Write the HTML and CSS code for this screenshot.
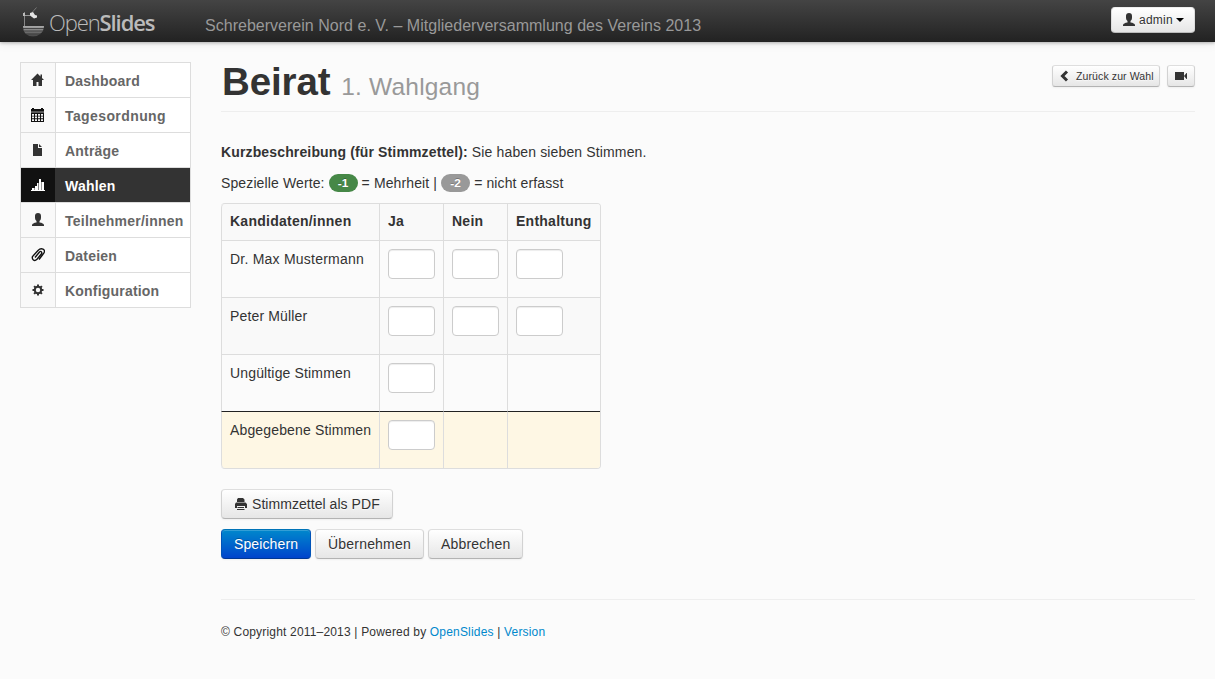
FILE: index.html
```html
<!DOCTYPE html>
<html lang="de">
<head>
<meta charset="utf-8">
<title>Beirat – OpenSlides</title>
<link rel="stylesheet" href="styles.css">
</head>
<body>
<header class="navbar">
  <a class="logo" href="#">
    <svg class="boat" width="24" height="32" viewBox="0 0 24 32">
      <defs><linearGradient id="hull" x1="0" x2="0" y1="0" y2="1"><stop offset="0" stop-color="#aaa"/><stop offset="1" stop-color="#444"/></linearGradient></defs>
      <path d="M1 20h21q0 5-4 8-3 2.500-7 2.500t-7-2.500q-3-3-3-8z" fill="url(#hull)"/>
      <path d="M1 22.500h21M2 25h20M4 28h15" stroke="#333" stroke-width=".8"/>
      <path d="M2.500 6v14" stroke="#888"/><path d="M1 7h2v3H1z" fill="#bbb"/><path d="M3 9.500h5" stroke="#999"/>
      <path d="M8 7l3-1 2 3 2 .5v2l-3 1-4-3z" fill="#e4e4e4"/>
      <path d="M10.500 6l4-4.500" stroke="#777"/>
    </svg>
    <span class="logo-text"><span class="logo-open">Open</span><b class="logo-slides">Slides</b></span>
  </a>
  <span class="event">Schreberverein Nord e. V. – Mitgliederversammlung des Vereins 2013</span>
  <button class="btn user">
    <svg width="14" height="14" viewBox="0 0 14 14"><path d="M4 3q0-3 3-3t3 3v2q0 2-1.500 3v1.500q4 .5 4.500 2.500v1H1v-1q.5-2 4.500-2.500V8Q4 7 4 5z" fill="#333"/></svg><span class="t-admin">admin</span><i class="caret"></i>
  </button>
</header>
<div class="page">
  <nav class="sidebar">
    <a href="#"><span class="icon"><svg width="14" height="14" viewBox="0 0 14 14"><path d="M6.500 .5L0 7h2v6h3.500V9h2v4H11V7h2L11 5V1.500H9.500V3.500z" fill="#333"/></svg></span><span class="label l1">Dashboard</span></a>
    <a href="#"><span class="icon"><svg width="14" height="14" viewBox="0 0 14 14"><path d="M0 1h1V0h2v1h7V0h2v1h1v2H0z" fill="#111"/><path d="M0 3h13v1.500H0z" fill="#555"/><path d="M0 4.500h13V14H0z" fill="#111"/><path d="M1 6h2v1.700H1zM4 6h2v1.700H4zM7 6h2v1.700H7zM10 6h2v1.700h-2zM1 8.600h2v1.700H1zM4 8.600h2v1.700H4zM7 8.600h2v1.700H7zM10 8.600h2v1.700h-2zM1 11.200h2v1.700H1zM4 11.200h2v1.700H4zM7 11.200h2v1.700H7zM10 11.200h2v1.700h-2z" fill="#f4f4f4"/></svg></span><span class="label l2">Tagesordnung</span></a>
    <a href="#"><span class="icon"><svg width="14" height="14" viewBox="0 0 14 14"><path d="M2 1h5v4h4v8H2zM8 1l3 3H8z" fill="#333"/></svg></span><span class="label l3">Anträge</span></a>
    <a class="active" href="#"><span class="icon"><svg width="14" height="14" viewBox="0 0 14 14"><path d="M0 12h14v1H0zM1 10h2v2H1zM4 8h2v4H4zM6 5h1.500v7H6zM8 1h2v11H8zM11 4h2v8h-2z" fill="#fff"/><path d="M3 10h1v2H3zM10 4h1v8h-1z" fill="#999"/></svg></span><span class="label l4">Wahlen</span></a>
    <a href="#"><span class="icon"><svg width="14" height="14" viewBox="0 0 14 14"><path d="M4 3q0-3 3-3t3 3v2q0 2-1.500 3v1.500q4 .5 4.500 2.500v1H1v-1q.5-2 4.500-2.500V8Q4 7 4 5z" fill="#333"/></svg></span><span class="label l5">Teilnehmer/innen</span></a>
    <a href="#"><span class="icon"><svg width="14" height="14" viewBox="0 0 14 14"><path d="M4 9.500L8.500 4q1.300-1.200 2 0t-.2 2L6 11.200q-2 2-3.600.8T1.500 8.500L7 2.500Q9.500 0 12 1.200t.8 4L8 11.500" fill="none" stroke="#111" stroke-width="1.400"/></svg></span><span class="label l6">Dateien</span></a>
    <a href="#"><span class="icon"><svg width="14" height="14" viewBox="0 0 14 14"><circle cx="7" cy="7" r="3.200" fill="none" stroke="#333" stroke-width="2"/><path d="M7 1.500v2M7 10.500v2M1.500 7h2M10.500 7h2M3.100 3.100l1.400 1.400M9.500 9.500l1.400 1.400M3.100 10.900l1.400-1.400M9.500 4.500l1.400-1.400" stroke="#333" stroke-width="2"/></svg></span><span class="label l7">Konfiguration</span></a>
  </nav>
  <main class="content">
    <div class="page-header">
      <h1><span class="title">Beirat</span> <small>1. Wahlgang</small></h1>
      <div class="actions">
        <button class="btn mini"><svg width="14" height="14" viewBox="0 0 14 14"><path d="M9 2.500L4.500 7 9 11.500" fill="none" stroke="#333" stroke-width="3"/></svg><span class="t-back">Zurück zur Wahl</span></button>
        <button class="btn mini"><svg width="14" height="14" viewBox="0 0 14 14"><path d="M1 3h9v8H1zM10 7l2.500-3H13v6h-.5z" fill="#333"/></svg></button>
      </div>
    </div>
    <p class="desc"><b>Kurzbeschreibung (für Stimmzettel):</b> <span class="t-desc">Sie haben sieben Stimmen.</span></p>
    <p class="values"><span class="v1">Spezielle Werte:</span><span class="badge green">-1</span><span class="v2">= Mehrheit |</span><span class="badge">-2</span><span class="v3">= nicht erfasst</span></p>
    <table>
      <colgroup><col class="c1"><col class="c2"><col class="c2"><col class="c3"></colgroup>
      <tr class="head odd"><th><span class="h1t">Kandidaten/innen</span></th><th>Ja</th><th>Nein</th><th><span class="h4t">Enthaltung</span></th></tr>
      <tr><td><span class="r1">Dr. Max Mustermann</span></td><td><input></td><td><input></td><td><input></td></tr>
      <tr class="odd"><td><span class="r2">Peter Müller</span></td><td><input></td><td><input></td><td><input></td></tr>
      <tr><td><span class="r3">Ungültige Stimmen</span></td><td><input></td><td></td><td></td></tr>
      <tr class="total"><td><span class="r4">Abgegebene Stimmen</span></td><td><input></td><td></td><td></td></tr>
    </table>
    <div class="buttons first"><button class="btn pdf"><svg width="14" height="14" viewBox="0 0 14 14"><path d="M4 1h5l1.500 1.500V5H3V2.500zM2 5.500h9.500L13 7v4h-2V9H2.500v2H1V7zM3.500 10H10v1H3.500zM3 12h7.500v1H3z" fill="#333"/><path d="M1 7h12v4h-2V9H3v2H1z" fill="#333"/></svg><span class="b0">Stimmzettel als PDF</span></button></div>
    <div class="buttons"><button class="btn primary"><span class="b1">Speichern</span></button><button class="btn apply"><span class="b2">Übernehmen</span></button><button class="btn cancel"><span class="b3">Abbrechen</span></button></div>
    <footer>© Copyright 2011–2013 | Powered by <a href="#">OpenSlides</a> | <a href="#">Version</a></footer>
  </main>
</div>
</body>
</html>
```
FILE: styles.css
```css
* { box-sizing: border-box; }
body { margin: 0; min-height: 679px; background: #fbfbfb; color: #333; font: 14px/20px "Liberation Sans", Arial, sans-serif; }
a { color: #08c; text-decoration: none; }
svg { display: block; flex: none; }
.navbar { display: flex; align-items: flex-start; height: 42px; padding: 0 20px; background: linear-gradient(#444, #222); box-shadow: 0 1px 3px rgba(0,0,0,.25), 0 1px 10px rgba(0,0,0,.1); position: relative; }
.logo { display: flex; width: 185px; padding: 6px 0 0 2px; color: #bbb; }
.logo-text { font: 300 22px/32px "Open Sans", sans-serif; margin-left: 3px; white-space: nowrap; letter-spacing: -1.1px; }
.logo-slides { font-weight: 600; }
.event { color: #999; font-size: 16px; margin-top: 16px; white-space: nowrap; letter-spacing: .02px; }
.btn { display: flex; align-items: center; justify-content: flex-start; gap: 4px; height: 30px; margin: 0; padding: 0 12px; border: 1px solid #ccc; border-color: #dedede #d2d2d2 #b3b3b3; border-radius: 4px; background: linear-gradient(#fff, #e6e6e6); color: #333; font: 14px/20px "Liberation Sans", Arial, sans-serif; text-shadow: 0 1px 1px rgba(255,255,255,.75); box-shadow: inset 0 1px 0 rgba(255,255,255,.2), 0 1px 2px rgba(0,0,0,.05); white-space: nowrap; }
.user { width: 84px; height: 26px; margin: 7px 0 0 auto; padding: 0 10px; font-size: 12px; gap: 3px; border-color: #eee #ddd #bbb; }
.t-admin { letter-spacing: .25px; }
.caret { border: 4px solid transparent; border-top-color: #000; border-bottom: 0; }
.page { display: flex; padding: 20px 20px 0; gap: 30px; }
.sidebar { width: 171px; height: 246px; border: 1px solid #ddd; background: #fff; flex: none; }
.sidebar a { display: flex; height: 35px; color: #666; font-weight: bold; border-bottom: 1px solid #ddd; }
.sidebar a:last-child { border-bottom: 0; height: 34px; }
.icon { width: 35px; border-right: 1px solid #ddd; background: #f9f9f9; padding: 10px 0 0 10px; }
.label { padding: 8px 0 0 9px; white-space: nowrap; letter-spacing: .2px; }
.l2 { letter-spacing: .4px; }
.l5 { letter-spacing: .23px; }
.sidebar .active { background: #333; color: #fff; margin: -1px 0 0; height: 36px; border-top: 1px solid #ddd; }
.active .icon { background: #111; border-color: #333; }
.content { flex: 1; min-width: 0; }
.page-header { display: flex; justify-content: space-between; height: 50px; border-bottom: 1px solid #eee; }
h1 { margin: 0; font-size: 38.500px; line-height: 40px; letter-spacing: 0; }
.title { padding-left: 1px; letter-spacing: -.1px; }
small { font-size: 24.500px; font-weight: normal; color: #999; letter-spacing: .2px; }
.actions { display: flex; gap: 7px; padding-top: 3px; }
.mini { height: 22px; padding: 0 6px; font-size: 10.500px; border-radius: 3px; width: 28px; }
.mini:first-child { width: 108px; padding-left: 5px; }
.t-back { letter-spacing: .11px; }
p { margin: 0; }
.desc { margin-top: 30px; white-space: nowrap; letter-spacing: .14px; }
.values { display: flex; align-items: center; margin-top: 11px; gap: 4px; white-space: nowrap; letter-spacing: .12px; }
.badge { width: 29px; height: 18px; border-radius: 9px; background: #999; color: #fff; font: bold 11.844px/18px "Liberation Sans", Arial, sans-serif; letter-spacing: 0; text-align: center; text-shadow: 0 -1px 0 rgba(0,0,0,.25); }
.green { background: #468847; }
table { margin-top: 10px; width: 380px; table-layout: fixed; border-collapse: separate; border-spacing: 0; border: 1px solid #ddd; border-left: 0; border-radius: 4px; overflow: hidden; }
.c1 { width: 158px; } .c2 { width: 64px; } .c3 { width: 93px; }
td, th { height: 57px; padding: 8px; text-align: left; vertical-align: top; border-left: 1px solid #ddd; border-top: 1px solid #ddd; white-space: nowrap; letter-spacing: .15px; }
th { height: 36px; border-top: 0; padding-top: 7px; letter-spacing: .25px; }
.r1 { letter-spacing: .23px; }
.odd { background: #f9f9f9; }
.total td { background: #fef7e4; border-top-color: #222; }
.head th:first-child { border-top-left-radius: 4px; }
.total td:first-child { border-bottom-left-radius: 4px; }
input { display: block; width: 47px; height: 30px; border: 1px solid #ccc; border-radius: 4px; background: #fff; box-shadow: inset 0 1px 1px rgba(0,0,0,.075); padding: 4px; }
.buttons { display: flex; gap: 4px; margin-top: 10px; }
.buttons.first { margin-top: 20px; }
.pdf { width: 172px; }
.b0 { letter-spacing: .05px; }
.primary { width: 90px; background: linear-gradient(#08c, #04c); color: #fff; border-color: #0074b8 #0053b8 #003794; text-shadow: 0 -1px 0 rgba(0,0,0,.25); }
.b1 { letter-spacing: .12px; }
.b2, .b3 { letter-spacing: .2px; }
.apply { width: 109px; } .cancel { width: 95px; }
footer { margin-top: 40px; padding-top: 22px; border-top: 1px solid #eee; font-size: 12px; white-space: nowrap; letter-spacing: .18px; }
```
